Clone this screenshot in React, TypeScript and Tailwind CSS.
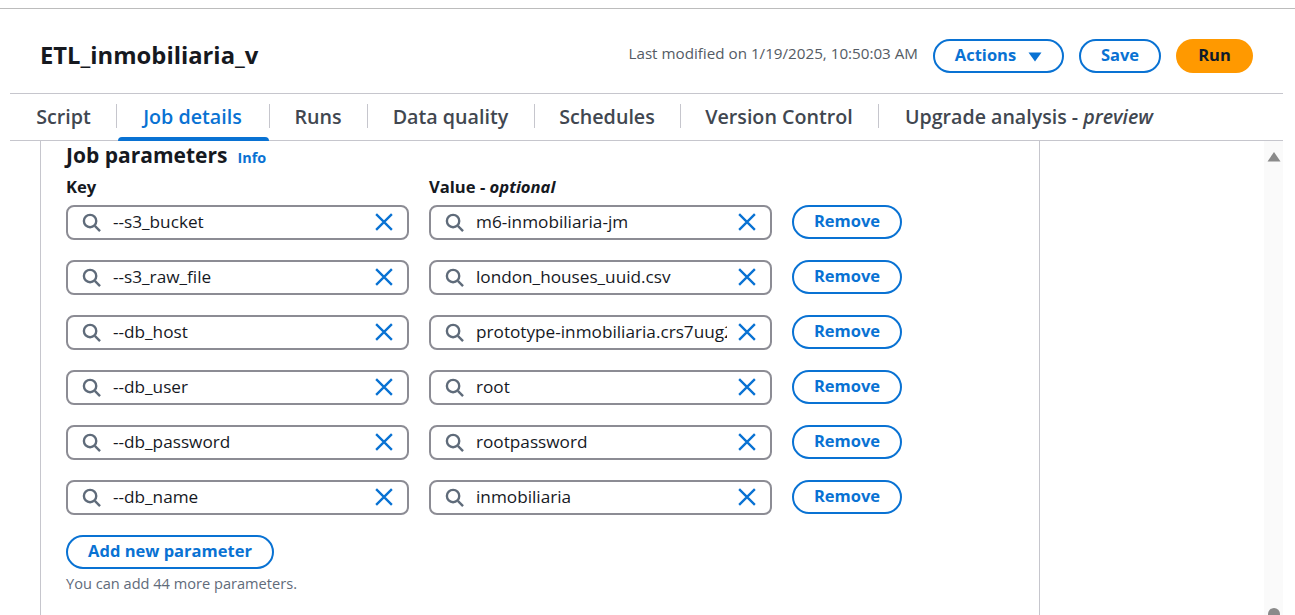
const rows: [string, string][] = [
  ["--s3_bucket", "m6-inmobiliaria-jm"],
  ["--s3_raw_file", "london_houses_uuid.csv"],
  ["--db_host", "prototype-inmobiliaria.crs7uug2mq0a.us-east-1.rds.amazonaws.com"],
  ["--db_user", "root"],
  ["--db_password", "rootpassword"],
  ["--db_name", "inmobiliaria"],
];

function Search() {
  return (
    <svg width="19" height="19" viewBox="0 0 16 16" fill="none" stroke="#5f6b7a" strokeWidth="2" className="shrink-0">
      <circle cx="6.8" cy="6.8" r="5.2" />
      <path d="M10.8 10.8l4.4 4.4" />
    </svg>
  );
}

function Clear() {
  return (
    <svg width="18" height="18" viewBox="0 0 16 16" fill="none" stroke="#0972d3" strokeWidth="2.1" className="shrink-0">
      <path d="M1 1l14 14M15 1L1 15" />
    </svg>
  );
}

function Field({ value }: { value: string }) {
  return (
    <div className="flex h-[35px] w-[343px] items-center rounded-lg border-2 border-[#8c8c94] bg-white pl-[14px] pr-[14px]">
      <span className="mb-[1px] flex"><Search /></span>
      <span className="ml-[12px] w-[251px] overflow-hidden whitespace-nowrap pb-[2px] text-[17.2px] text-[#16191f]">{value}</span>
      <span className="mb-[1px] ml-auto flex"><Clear /></span>
    </div>
  );
}

const tabs: { t: string; w: string }[] = [
  { t: "Script", w: "w-[105px]" },
  { t: "Job details", w: "w-[153px]" },
  { t: "Runs", w: "w-[98px]" },
  { t: "Data quality", w: "w-[167px]" },
  { t: "Schedules", w: "w-[146px]" },
  { t: "Version Control", w: "w-[198px]" },
];

export default function App() {
  return (
    <div className="flex h-[615px] w-[1295px] flex-col overflow-hidden bg-white font-['Open_Sans','Noto_Sans',sans-serif]">
      <div className="mt-2 h-px shrink-0 bg-[#bcbcbc]" />
      <div className="flex h-[84px] shrink-0 items-center pl-[40px] pr-[42px] pt-[10px]">
        <h1 className="text-[23.8px] font-bold leading-none text-[#16191f]">ETL_inmobiliaria_v</h1>
        <span className="ml-auto pb-[5px] text-[15.2px] text-[#545b64]">Last modified on 1/19/2025, 10:50:03 AM</span>
        <button className="ml-[15px] flex h-[34px] w-[131px] items-center justify-center gap-[12px] rounded-full border-2 border-[#0972d3] pb-[2px] text-[16.5px] font-bold text-[#0972d3]">
          Actions
          <svg width="14" height="10" viewBox="0 0 14 10" className="mt-[3px]"><path d="M0.5 0.5h13L7 9.5z" fill="#0972d3" /></svg>
        </button>
        <button className="ml-[15px] h-[34px] w-[82px] rounded-full border-2 border-[#0972d3] pb-[2px] text-[16.5px] font-bold text-[#0972d3]">Save</button>
        <button className="ml-[15px] h-[34px] w-[77px] rounded-full bg-[#ff9900] pb-[2px] text-[16.5px] font-bold text-[#0f1b2a]">Run</button>
      </div>
      <div className="mx-[10px] flex h-[48px] w-[1273px] shrink-0 items-center border-y border-[#c6c6cd] pl-[1px]">
        {tabs.map(({ t, w }, i) => (
          <div key={t} className={`relative flex h-full items-center justify-center ${w}`}>
            {i > 0 && <span className="absolute left-0 top-[10px] h-[24px] w-px bg-[#c6c6cd]" />}
            <span className={`whitespace-nowrap text-[19.7px] font-semibold ${i === 1 ? "text-[#0972d3]" : "text-[#414750]"}`}>{t}</span>
            {i === 1 && <span className="absolute bottom-[-1px] left-[2px] right-[0px] h-[4px] rounded-t bg-[#0972d3]" />}
          </div>
        ))}
        <div className="relative flex h-full items-center pl-[27px]">
          <span className="absolute left-0 top-[10px] h-[24px] w-px bg-[#c6c6cd]" />
          <span className="whitespace-nowrap text-[19.6px] font-semibold text-[#414750]">Upgrade analysis - <i>preview</i></span>
        </div>
      </div>
      <div className="flex min-h-0 flex-1">
        <div className="ml-[40px] w-[1000px] shrink-0 border-x border-[#c6c6cd] pl-[25px]">
          <div className="flex items-baseline">
            <h2 className="text-[21px] font-bold leading-[28px] text-[#16191f]">Job parameters</h2>
            <span className="ml-[10px] text-[14.4px] font-bold text-[#0972d3]">Info</span>
          </div>
          <div className="mt-[8px] flex text-[16.6px] font-bold leading-[20px] text-[#16191f]">
            <span className="w-[363px]">Key</span>
            <span>Value - <i>optional</i></span>
          </div>
          <div className="mt-[8px] flex flex-col gap-[20px]">
            {rows.map(([k, v]) => (
              <div key={k} className="flex items-start gap-[20px]">
                <Field value={k} />
                <Field value={v} />
                <button className="h-[34px] w-[110px] rounded-full border-2 border-[#0972d3] pb-[2px] text-[16.5px] font-bold text-[#0972d3]">Remove</button>
              </div>
            ))}
          </div>
          <button className="mt-[20px] block h-[34px] w-[208px] rounded-full border-2 border-[#0972d3] pb-[2px] text-[16.5px] font-bold text-[#0972d3]">Add new parameter</button>
          <p className="mt-[4px] text-[14.6px] leading-[20px] text-[#5f6b7a]">You can add 44 more parameters.</p>
        </div>
        <div className="ml-[224px] flex w-[19px] flex-col items-center justify-between bg-[#fafafa]">
          <svg width="14" height="11" viewBox="0 0 14 11" className="mt-[10px]"><path d="M7 1l6.5 9.5H.5z" fill="#8a8a8a" /></svg>
          <span className="mb-[-5px] h-[12px] w-[12px] rounded-full bg-[#8a8a8a]" />
        </div>
      </div>
    </div>
  );
}
